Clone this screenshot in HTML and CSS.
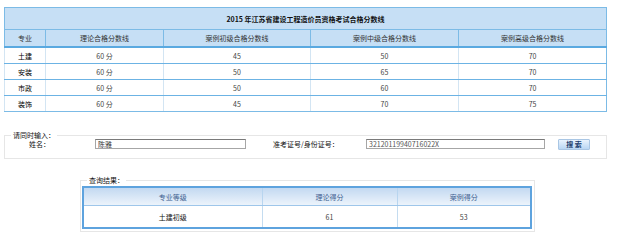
FILE: index.html
```html
<!DOCTYPE html>
<html lang="zh-CN">
<head>
<meta charset="utf-8">
<title>2015 年江苏省建设工程造价员资格考试合格分数线</title>
<link rel="stylesheet" href="styles.css">
</head>
<body>
<table class="score-table">
  <colgroup>
    <col class="c1"><col class="c2"><col class="c3"><col class="c4"><col class="c5">
  </colgroup>
  <tr class="title-row"><th colspan="5">2015 年江苏省建设工程造价员资格考试合格分数线</th></tr>
  <tr class="head-row">
    <th>专业</th><th>理论合格分数线</th><th>案例初级合格分数线</th><th>案例中级合格分数线</th><th>案例高级合格分数线</th>
  </tr>
  <tr><td class="major">土建</td><td>60 分</td><td>45</td><td>50</td><td>70</td></tr>
  <tr><td class="major">安装</td><td>60 分</td><td>50</td><td>65</td><td>70</td></tr>
  <tr><td class="major">市政</td><td>60 分</td><td>50</td><td>60</td><td>70</td></tr>
  <tr class="last"><td class="major">装饰</td><td>60 分</td><td>45</td><td>70</td><td>75</td></tr>
</table>

<fieldset class="query">
  <legend>请同时输入：</legend>
  <div class="query-row">
    <span class="lbl lbl-name">姓名：</span>
    <input class="inp inp-name" type="text" value="陈雅">
    <span class="lbl lbl-id">准考证号/身份证号：</span>
    <input class="inp inp-id" type="text" value="32120119940716022X">
    <button class="btn" type="button">搜 索</button>
  </div>
</fieldset>

<fieldset class="result">
  <legend>查询结果：</legend>
  <table class="result-table">
    <colgroup><col class="r1"><col class="r2"><col class="r3"></colgroup>
    <tr class="rhead"><th>专业等级</th><th>理论得分</th><th>案例得分</th></tr>
    <tr class="rdata"><td class="rmajor">土建初级</td><td>61</td><td>53</td></tr>
  </table>
</fieldset>
</body>
</html>
```

FILE: styles.css
```css
html, body {
  margin: 0;
  padding: 0;
  background: #fff;
}
body {
  font-family: "Noto Sans CJK SC", "Liberation Sans", sans-serif;
  font-size: 7px;
  color: #333;
  padding: 7px 0 0 4px;
}

.score-table {
  border-collapse: collapse;
  table-layout: fixed;
  width: 603px;
  border: 1px solid #7cbbe6;
}
.score-table .c1 { width: 41px; }
.score-table .c2 { width: 118px; }
.score-table .c3 { width: 147px; }
.score-table .c4 { width: 148px; }
.score-table .c5 { width: 148px; }

.score-table th,
.score-table td {
  padding: 0;
  text-align: center;
  font-weight: normal;
  line-height: 10px;
  white-space: nowrap;
  overflow: hidden;
}
.title-row th {
  height: 21px;
  background: #c6dff5;
  font-weight: bold;
  color: #111;
  border-bottom: 1px solid #7cbbe6;
}
.head-row th {
  height: 16px;
  background: #c6dff5;
  color: #333;
  border-left: 1px solid #7cbbe6;
  border-bottom: 2px solid #5aa9e0;
}
.score-table td {
  height: 15px;
  border-left: 1px solid #d3e5f3;
  border-bottom: 1px solid #6cb3e4;
  color: #444;
}
.score-table tr.last td { border-bottom: 1px solid #7cbbe6; }
.score-table td.major { color: #000; }

fieldset {
  margin: 0;
  padding: 0;
  border: 1px solid #e6e6e6;
  min-width: 0;
}
legend {
  font-size: 7px;
  line-height: 8px;
  height: 8px;
  padding: 0 2px;
  color: #111;
}

.query {
  margin-top: 19px;
  width: 601px;
  padding: 0 0 9px 0;
}
.query legend { margin-left: 6px; }
.query-row {
  display: flex;
  align-items: center;
  height: 10px;
}
.lbl {
  color: #111;
  white-space: nowrap;
  line-height: 10px;
}
.lbl-name {
  width: 45px;
  text-align: right;
}
.inp {
  box-sizing: border-box;
  height: 10px;
  margin: 0;
  padding: 0 2px;
  border: 1px solid #a6a6a6;
  border-top-color: #7a7a7a;
  font-family: "Noto Sans CJK SC", "Liberation Sans", sans-serif;
  font-size: 7px;
  line-height: 8px;
  color: #333;
  background: #fff;
  outline: none;
}
.inp-name {
  margin-left: 45px;
  width: 151px;
}
.lbl-id {
  margin-left: 27px;
  width: 62px;
}
.inp-id {
  margin-left: 31px;
  width: 179px;
  color: #555;
}
.btn {
  margin-left: 13px;
  box-sizing: border-box;
  width: 32px;
  height: 11px;
  padding: 0;
  border: 1px solid #a9c6e4;
  border-radius: 1px;
  background: linear-gradient(#e9f3fd, #b9d6f3);
  font-family: "Noto Sans CJK SC", "Liberation Sans", sans-serif;
  font-size: 7px;
  line-height: 9px;
  font-weight: bold;
  color: #1d3e6e;
}

.result {
  margin: 17px 0 0 76px;
  width: 451px;
  padding: 2px 1px 2px 1px;
}
.result legend { margin-left: 5px; }
.result-table {
  border-collapse: collapse;
  table-layout: fixed;
  width: 448px;
  border: 2px solid #5ea3de;
}
.result-table .r1 { width: 179px; }
.result-table .r2 { width: 135px; }
.result-table .r3 { width: 134px; }
.result-table th,
.result-table td {
  padding: 0;
  text-align: center;
  line-height: 10px;
  font-weight: normal;
  white-space: nowrap;
}
.rhead th {
  height: 17px;
  background: linear-gradient(#c3d9f1, #ecf3fb);
  color: #3e5f90;
  border-left: 1px solid #b8d5ef;
  border-bottom: 1px solid #9ec6ea;
}
.rdata td {
  height: 21px;
  color: #444;
  border-left: 1px solid #c4dcf0;
}
.rdata td.rmajor { color: #111; }
```
